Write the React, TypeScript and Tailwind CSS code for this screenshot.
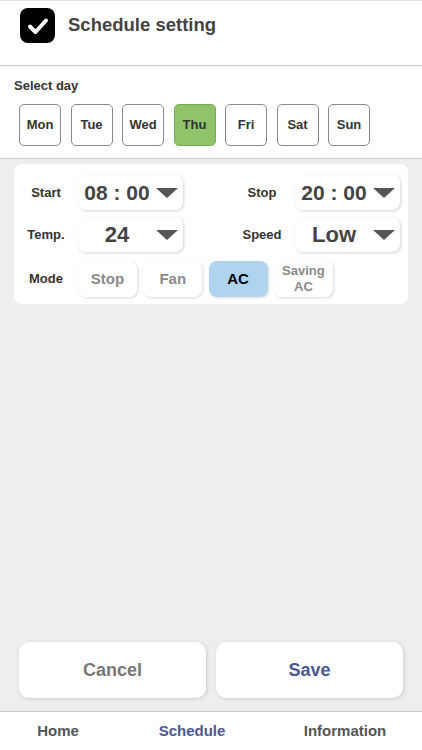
import React from "react";

const days = ["Mon", "Tue", "Wed", "Thu", "Fri", "Sat", "Sun"];
const modes = ["Stop", "Fan", "AC", "Saving AC"];

const Arrow = () => (
  <svg width="22" height="10" viewBox="0 0 22 10" className="shrink-0">
    <polygon points="0,0 22,0 11,10" fill="#555555" />
  </svg>
);

const Dropdown: React.FC<{ value: string; size: string }> = ({ value, size }) => (
  <div className="w-[105px] h-[35px] flex items-center rounded-[8px] bg-white shadow-[1px_1px_3px_rgba(0,0,0,0.18)] pr-[5px]">
    <span className={`flex-1 text-center ${size} font-bold text-[#444]`}>{value}</span>
    <Arrow />
  </div>
);

const Label: React.FC<{ text: string; w: string }> = ({ text, w }) => (
  <span className={`${w} text-center text-[13px] font-bold text-[#333]`}>{text}</span>
);

export default function App() {
  const selectedDay = "Thu";
  const selectedMode = "AC";

  return (
    <div
      className="w-[422px] h-[750px] flex flex-col bg-white overflow-hidden"
      style={{ fontFamily: '"Liberation Sans", Arial, sans-serif' }}
    >
      {/* header */}
      <div className="h-[66px] shrink-0 border-t border-t-[#e2e2e2] border-b border-b-[#c9c9c9] flex items-start pl-[20px] pt-[7px] gap-[13px]">
        <div className="w-[35px] h-[35px] rounded-[8px] bg-black flex items-center justify-center">
          <svg width="22" height="18" viewBox="0 0 22 18">
            <path d="M3 9.5 L8.5 15 L19 3.5" fill="none" stroke="#fff" strokeWidth="4" strokeLinecap="round" strokeLinejoin="round" />
          </svg>
        </div>
        <span className="text-[18.5px] font-bold text-[#444] leading-[22px] mt-[6px]">Schedule setting</span>
      </div>

      {/* select day */}
      <div className="h-[93px] shrink-0 border-b border-b-[#c9c9c9] pt-[12px] px-[14px]">
        <div className="text-[13px] leading-[16px] font-bold text-[#333]">Select day</div>
        <div className="flex gap-[9.5px] mt-[10px] pl-[5px]">
          {days.map((d) => (
            <div
              key={d}
              className={`w-[42px] h-[42px] rounded-[5px] border flex items-center justify-center text-[13px] font-bold ${
                d === selectedDay ? "bg-[#8fc46b] border-[#7aa85a] text-[#333]" : "bg-white border-[#8a8a8a] text-[#333]"
              }`}
            >
              {d}
            </div>
          ))}
        </div>
      </div>

      {/* content */}
      <div className="flex-1 bg-[#eeeeee] flex flex-col pt-[5px] pb-[13px]">
        <div className="mx-[14px] bg-white rounded-[8px] pt-[11px] pb-[7px] flex flex-col gap-[7px]">
          <div className="flex items-center">
            <Label text="Start" w="w-[64px]" />
            <Dropdown value="08 : 00" size="text-[21px]" />
            <div className="flex-1" />
            <Label text="Stop" w="w-[66px]" />
            <Dropdown value="20 : 00" size="text-[21px]" />
            <div className="w-[8px]" />
          </div>
          <div className="flex items-center">
            <Label text="Temp." w="w-[64px]" />
            <Dropdown value="24" size="text-[22px]" />
            <div className="flex-1" />
            <Label text="Speed" w="w-[66px]" />
            <Dropdown value="Low" size="text-[22px]" />
            <div className="w-[8px]" />
          </div>
          <div className="flex items-center mt-[2px]">
            <Label text="Mode" w="w-[64px]" />
            <div className="flex gap-[6.3px]">
              {modes.map((m) => (
                <div
                  key={m}
                  className={`w-[59px] h-[36px] rounded-[8px] flex items-center justify-center text-center font-bold shadow-[1px_1px_3px_rgba(0,0,0,0.15)] ${
                    m === selectedMode
                      ? "bg-[#afd4f0] text-black text-[15px]"
                      : m === "Saving AC"
                      ? "bg-white text-[#8a8a8a] text-[13px] leading-[16px] px-[8px]"
                      : "bg-white text-[#8a8a8a] text-[15px]"
                  }`}
                >
                  {m}
                </div>
              ))}
            </div>
          </div>
        </div>

        <div className="flex-1" />

        <div className="flex gap-[10px] px-[19px]">
          <button className="flex-1 h-[56px] rounded-[10px] bg-white shadow-[1px_1px_4px_rgba(0,0,0,0.15)] text-[18px] font-bold text-[#777]">
            Cancel
          </button>
          <button className="flex-1 h-[56px] rounded-[10px] bg-white shadow-[1px_1px_4px_rgba(0,0,0,0.15)] text-[18px] font-bold text-[#4a5a8f]">
            Save
          </button>
        </div>
      </div>

      {/* tab bar */}
      <div className="h-[39px] shrink-0 border-t border-t-[#c9c9c9] flex items-center pt-[1px] text-[15px] font-bold">
        <span className="w-[116px] text-center text-[#555]">Home</span>
        <span className="w-[152px] text-center text-[#4a5a8f]">Schedule</span>
        <span className="flex-1 text-center text-[#555]">Information</span>
      </div>
    </div>
  );
}
